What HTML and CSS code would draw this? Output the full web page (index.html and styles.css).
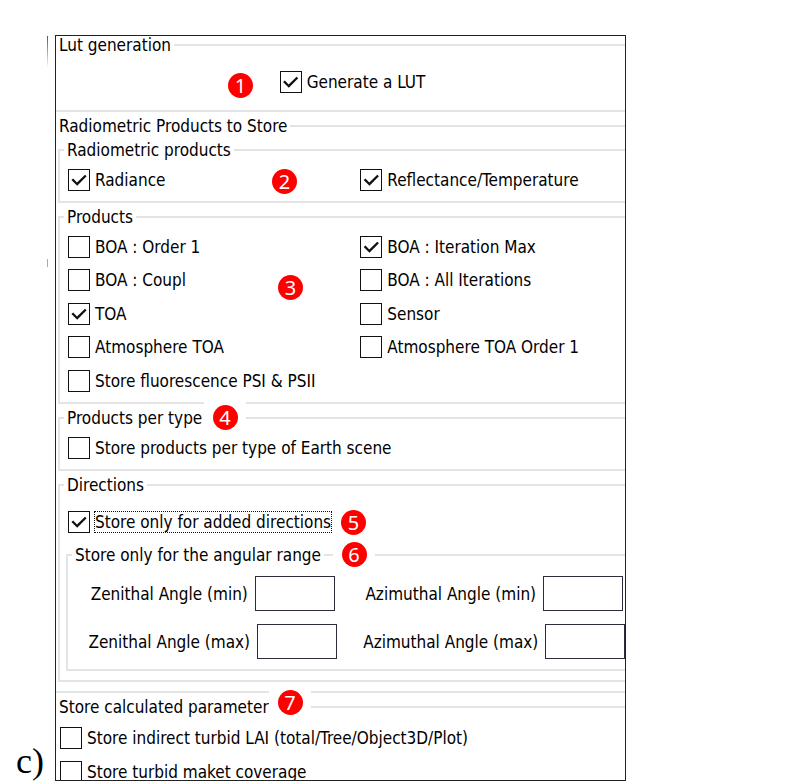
FILE: index.html
```html
<!DOCTYPE html>
<html lang="en">
<head>
<meta charset="utf-8">
<title>LUT generation and products</title>
<link rel="stylesheet" href="styles.css">
</head>
<body>
<main class="figure">
  <div class="margin"><span class="mark mark-top"></span><span class="mark mark-mid"></span><span class="caption">c)</span></div>
  <form class="panel">
    <fieldset class="section">
      <legend>Lut generation</legend>
      <div class="row centered">
        <span class="badge badge-1">1</span>
        <label class="check"><input type="checkbox" checked>Generate a LUT</label>
      </div>
    </fieldset>

    <fieldset class="section products">
      <legend>Radiometric Products to Store</legend>

      <fieldset class="group">
        <legend>Radiometric products</legend>
        <div class="row options">
          <label class="check"><input type="checkbox" checked>Radiance</label>
          <label class="check"><input type="checkbox" checked>Reflectance/Temperature</label>
          <span class="badge badge-2">2</span>
        </div>
      </fieldset>

      <fieldset class="group">
        <legend>Products</legend>
        <div class="row options">
          <label class="check"><input type="checkbox">BOA : Order 1</label>
          <label class="check"><input type="checkbox" checked>BOA : Iteration Max</label>
          <label class="check"><input type="checkbox">BOA : Coupl</label>
          <label class="check"><input type="checkbox">BOA : All Iterations</label>
          <label class="check"><input type="checkbox" checked>TOA</label>
          <label class="check"><input type="checkbox">Sensor</label>
          <label class="check"><input type="checkbox">Atmosphere TOA</label>
          <label class="check"><input type="checkbox">Atmosphere TOA Order 1</label>
          <label class="check"><input type="checkbox">Store fluorescence PSI &amp; PSII</label>
          <span class="badge badge-3">3</span>
        </div>
      </fieldset>

      <fieldset class="group">
        <legend>Products per type<span class="patch patch-4"><span class="badge">4</span></span></legend>
        <div class="row">
          <label class="check"><input type="checkbox">Store products per type of Earth scene</label>
        </div>
      </fieldset>

      <fieldset class="group directions">
        <legend>Directions</legend>
        <div class="row">
          <label class="check"><input type="checkbox" checked><span class="focused">Store only for added directions</span></label>
          <span class="badge badge-5">5</span>
        </div>
        <fieldset class="group range">
          <legend>Store only for the angular range<span class="patch patch-6"><span class="badge">6</span></span></legend>
          <div class="angles">
            <label class="field">Zenithal Angle (min)<input type="text"></label>
            <label class="field">Azimuthal Angle (min)<input type="text"></label>
            <label class="field">Zenithal Angle (max)<input type="text"></label>
            <label class="field">Azimuthal Angle (max)<input type="text"></label>
          </div>
        </fieldset>
      </fieldset>
    </fieldset>

    <fieldset class="section">
      <legend>Store calculated parameters<span class="patch patch-7"><span class="badge">7</span></span></legend>
      <div class="row stack">
        <label class="check"><input type="checkbox">Store indirect turbid LAI (total/Tree/Object3D/Plot)</label>
        <label class="check"><input type="checkbox">Store turbid maket coverage</label>
      </div>
    </fieldset>
  </form>
</main>
</body>
</html>
```
FILE: styles.css
```css
* { box-sizing: border-box; }

body {
  margin: 0;
  background: #fff;
  color: #000;
  font: 17px/22px "DejaVu Sans Condensed", "Noto Sans", sans-serif;
}

.figure {
  display: grid;
  grid-template-columns: 55px minmax(0, 1fr) 172px;
  height: 100vh;
  padding: 35px 0 3px;
}

.margin {
  position: relative;
  display: flex;
  align-items: flex-end;
  padding-left: 16px;
}

.caption {
  font: 36px/40px "Liberation Serif", serif;
  color: #000;
}

.mark {
  position: absolute;
  left: 47px;
  width: 1px;
}

.mark-top {
  top: 1px;
  height: 32px;
  background: linear-gradient(#555, #fff);
}

.mark-mid {
  top: 224px;
  height: 8px;
  background: #aaa;
}

.panel {
  overflow: hidden;
  border: 1px solid #222;
}

fieldset {
  min-width: 0;
  margin: 0;
  padding: 0;
  border: 0 solid #e4e4e4;
}

legend {
  position: relative;
  padding: 0 3px;
  line-height: 18px;
  white-space: nowrap;
}

.section {
  border-width: 2px 0;
}

.section + .section {
  margin-top: 5px;
}

.section > .row {
  padding: 17px 4px;
}

.products {
  padding: 6px 0 9px 2px;
}

.products > legend {
  margin-left: -2px;
}

.group {
  border-width: 2px 0 2px 2px;
}

.group + .group {
  margin-top: 5px;
}

.group > legend {
  margin-left: 4px;
}

.group > .row {
  padding: 10px 0 10px 8px;
}

.row {
  position: relative;
}

.section > .centered {
  display: flex;
  justify-content: center;
  padding-left: 28px;
}

.options {
  display: grid;
  grid-template-columns: 53fr 48fr;
  grid-auto-rows: 22px 23px;
  row-gap: 11px;
}

.section > .stack {
  display: grid;
  row-gap: 12px;
  padding: 11px 4px;
}

.check {
  display: flex;
  align-items: center;
  gap: 5px;
  height: 22px;
  white-space: nowrap;
}

.check input {
  appearance: none;
  flex: none;
  width: 22px;
  height: 22px;
  margin: 0;
  border: 1px solid #111;
  background: #fff;
}

.check input:checked::before {
  content: "";
  display: block;
  height: 20px;
  background: #111;
  clip-path: polygon(12% 50%, 21% 43%, 40% 62%, 80% 24%, 88% 31%, 41% 79%);
}

.focused {
  outline: 1px dotted #111;
  line-height: 20px;
}

.directions {
  padding-bottom: 9px;
}

.directions > .row {
  padding: 17px 0 13px 8px;
}

.range {
  margin-left: 6px;
}

.angles {
  display: grid;
  grid-template-columns: 1fr 1fr;
  row-gap: 13px;
  margin-right: -10px;
  padding: 12px 0 10px 4px;
}

.field {
  display: flex;
  align-items: center;
  justify-content: center;
  gap: 7px;
  white-space: nowrap;
}

.field input {
  width: 80px;
  height: 35px;
  padding: 0 6px;
  border: 1px solid #2b2d3a;
  background: #fff;
  font: inherit;
}

.badge {
  display: block;
  width: 25px;
  height: 25px;
  border-radius: 50%;
  background: #f00;
  color: #fff;
  font: 20px/25px "Noto Sans", sans-serif;
  text-align: center;
}

.row > .badge { position: absolute; }
.badge-1 { left: 172px; top: 19px; }
.badge-2 { left: 212px; top: 10px; }
.badge-3 { left: 218px; top: 49px; }
.badge-5 { left: 281px; top: 16px; }

/* White backing that interrupts the group lines behind a badge */
.patch {
  position: absolute;
  display: grid;
  place-items: center;
  width: 42px;
  height: 32px;
  background: #fff;
}

.patch-4 { left: 140px; top: -8px; }
.patch-6 { left: 261px; top: -8px; }
.patch-7 { left: 213px; top: -12px; }
```
